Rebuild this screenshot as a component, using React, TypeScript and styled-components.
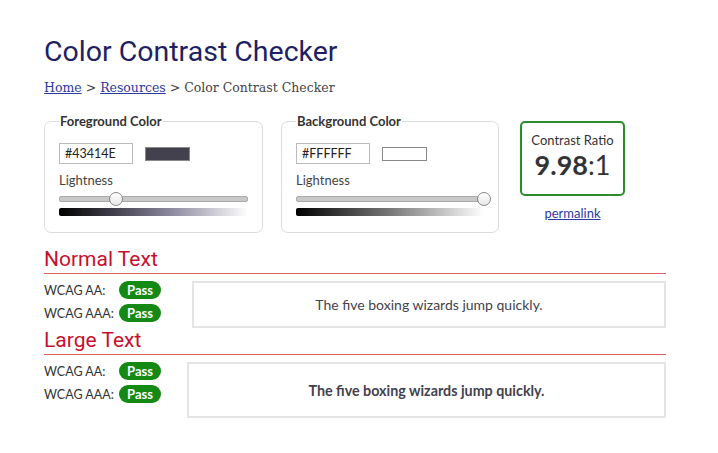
import React from "react";
import styled, { createGlobalStyle } from "styled-components";

const Global = createGlobalStyle`
  html, body { margin: 0; padding: 0; background: #fff; }
  body { font-family: "Lato", "Open Sans", sans-serif; color: #333; }
`;

const Page = styled.div`
  padding: 35px 0 0 44px;
  width: 622px;
`;

const Title = styled.h1`
  margin: 0;
  font-family: "Roboto", sans-serif;
  font-weight: 400;
  font-size: 28.5px;
  line-height: 34px;
  color: #1f1f63;
`;

const Crumbs = styled.div`
  margin-top: 11px;
  font-family: "DejaVu Serif", "Liberation Serif", serif;
  font-size: 12.5px;
  color: #444;
  line-height: 16px;
`;

const CrumbLink = styled.a`
  color: #2a3a9e;
  text-decoration: underline;
`;

const TopRow = styled.div`
  display: flex;
  align-items: flex-start;
  margin-top: 17px;
`;

const Field = styled.fieldset<{ $w: number; $mr: number }>`
  width: ${(p) => p.$w}px;
  box-sizing: border-box;
  margin: 0 ${(p) => p.$mr}px 0 0;
  padding: 4px 14px 16px 14px;
  border: 1px solid #dcdcdc;
  border-radius: 7px;
`;

const Legend = styled.legend`
  padding: 0 1px;
  font-size: 13px;
  font-weight: 700;
  color: #333;
  line-height: 16px;
`;

const InputRow = styled.div`
  display: flex;
  align-items: center;
  gap: 12px;
  margin-top: 10px;
`;

const HexInput = styled.div`
  width: 74px;
  height: 21px;
  box-sizing: border-box;
  border: 1px solid #bbb;
  padding: 0 5px;
  font-size: 12.5px;
  line-height: 19px;
  color: #222;
`;

const Swatch = styled.div<{ $c: string }>`
  width: 45px;
  height: 14px;
  box-sizing: border-box;
  background: ${(p) => p.$c};
  border: 1px solid #888;
`;

const Label = styled.div`
  margin-top: 7px;
  font-size: 13px;
  line-height: 18px;
  color: #444;
`;

const Slider = styled.div`
  position: relative;
  height: 16px;
  margin-top: 2px;
  display: flex;
  align-items: center;
`;

const Track = styled.div`
  flex: 1;
  height: 4px;
  border-radius: 2px;
  background: #c9c9c9;
  border: 1px solid #aaa;
`;

const Thumb = styled.div`
  position: absolute;
  top: 1px;
  width: 14px;
  height: 14px;
  margin-left: -7px;
  box-sizing: border-box;
  border-radius: 50%;
  border: 1px solid #888;
  background: linear-gradient(#fff, #e8e8e8);
`;

const Gradient = styled.div<{ $g: string }>`
  height: 8px;
  margin-top: 1px;
  border-radius: 2px;
  background: ${(p) => p.$g};
`;

const RatioCol = styled.div`
  width: 105px;
  display: flex;
  flex-direction: column;
  align-items: center;
  margin-top: 8px;
`;

const RatioBox = styled.div`
  width: 105px;
  height: 75px;
  box-sizing: border-box;
  border: 2px solid #2c8c2c;
  border-radius: 5px;
  display: flex;
  flex-direction: column;
  align-items: center;
  padding-top: 8px;
`;

const RatioLabel = styled.div`
  font-size: 13px;
  line-height: 18px;
  color: #333;
`;

const RatioValue = styled.div`
  font-size: 27px;
  line-height: 32px;
  color: #333;
`;

const RatioBold = styled.span`
  font-weight: 700;
`;

const Permalink = styled.a`
  margin-top: 9px;
  font-size: 13px;
  color: #2a3a9e;
  text-decoration: underline;
`;

const Section = styled.section<{ $mt: number }>`
  margin-top: ${(p) => p.$mt}px;
`;

const SectionTitle = styled.h2`
  margin: 0;
  font-family: "Roboto", sans-serif;
  font-weight: 400;
  font-size: 21px;
  line-height: 25px;
  color: #c8102e;
  padding-bottom: 1px;
  border-bottom: 1px solid #e06060;
`;

const Results = styled.div<{ $lw: number; $h: number }>`
  display: grid;
  grid-template-columns: ${(p) => p.$lw}px 1fr;
  margin-top: 7px;
  min-height: ${(p) => p.$h}px;
`;

const Checks = styled.div`
  display: flex;
  flex-direction: column;
  gap: 5px;
`;

const CheckRow = styled.div`
  display: flex;
  align-items: center;
  height: 18px;
`;

const CheckLabel = styled.span`
  width: 75px;
  font-size: 12.5px;
  color: #333;
`;

const Badge = styled.span`
  display: inline-flex;
  align-items: center;
  justify-content: center;
  height: 18px;
  width: 42px;
  border-radius: 9px;
  background: #148a14;
  color: #fff;
  font-weight: 700;
  font-size: 13px;
`;

const Sample = styled.div<{ $bold: boolean; $h: number }>`
  height: ${(p) => p.$h}px;
  box-sizing: border-box;
  border: 2px solid #e4e4e4;
  display: flex;
  align-items: center;
  justify-content: center;
  font-size: ${(p) => (p.$bold ? 14.3 : 14)}px;
  font-weight: ${(p) => (p.$bold ? 700 : 400)};
  color: #43414e;
  background: #fff;
`;

type PanelProps = {
  title: string;
  hex: string;
  lightness: number;
  gradient: string;
  w: number;
  mr: number;
};

function ColorPanel({ title, hex, lightness, gradient, w, mr }: PanelProps) {
  return (
    <Field $w={w} $mr={mr}>
      <Legend>{title}</Legend>
      <InputRow>
        <HexInput>{hex}</HexInput>
        <Swatch $c={hex} />
      </InputRow>
      <Label>Lightness</Label>
      <Slider>
        <Track />
        <Thumb style={{ left: `${lightness}%` }} />
      </Slider>
      <Gradient $g={gradient} />
    </Field>
  );
}

function ResultBlock({
  title,
  bold,
  labelW,
  boxH,
  mt,
}: {
  title: string;
  bold: boolean;
  labelW: number;
  boxH: number;
  mt: number;
}) {
  return (
    <Section $mt={mt}>
      <SectionTitle>{title}</SectionTitle>
      <Results $lw={labelW} $h={boxH}>
        <Checks>
          <CheckRow>
            <CheckLabel>WCAG AA:</CheckLabel>
            <Badge>Pass</Badge>
          </CheckRow>
          <CheckRow>
            <CheckLabel>WCAG AAA:</CheckLabel>
            <Badge>Pass</Badge>
          </CheckRow>
        </Checks>
        <Sample $bold={bold} $h={boxH}>
          The five boxing wizards jump quickly.
        </Sample>
      </Results>
    </Section>
  );
}

export default function App() {
  return (
    <>
      <Global />
      <Page>
        <Title>Color Contrast Checker</Title>
        <Crumbs>
          <CrumbLink href="#">Home</CrumbLink> &gt;{" "}
          <CrumbLink href="#">Resources</CrumbLink> &gt; Color Contrast Checker
        </Crumbs>
        <TopRow>
          <ColorPanel
            title="Foreground Color"
            hex="#43414E"
            lightness={30}
            gradient="linear-gradient(to right, #000 0%, #43414e 30%, #8e8aa0 60%, #fff 100%)"
            w={219}
            mr={18}
          />
          <ColorPanel
            title="Background Color"
            hex="#FFFFFF"
            lightness={100}
            gradient="linear-gradient(to right, #000 0%, #777 50%, #fff 100%)"
            w={218}
            mr={21}
          />
          <RatioCol>
            <RatioBox>
              <RatioLabel>Contrast Ratio</RatioLabel>
              <RatioValue>
                <RatioBold>9.98</RatioBold>:1
              </RatioValue>
            </RatioBox>
            <Permalink href="#">permalink</Permalink>
          </RatioCol>
        </TopRow>
        <ResultBlock title="Normal Text" bold={false} labelW={148} boxH={47} mt={14} />
        <ResultBlock title="Large Text" bold={true} labelW={143} boxH={56} mt={0} />
      </Page>
    </>
  );
}
